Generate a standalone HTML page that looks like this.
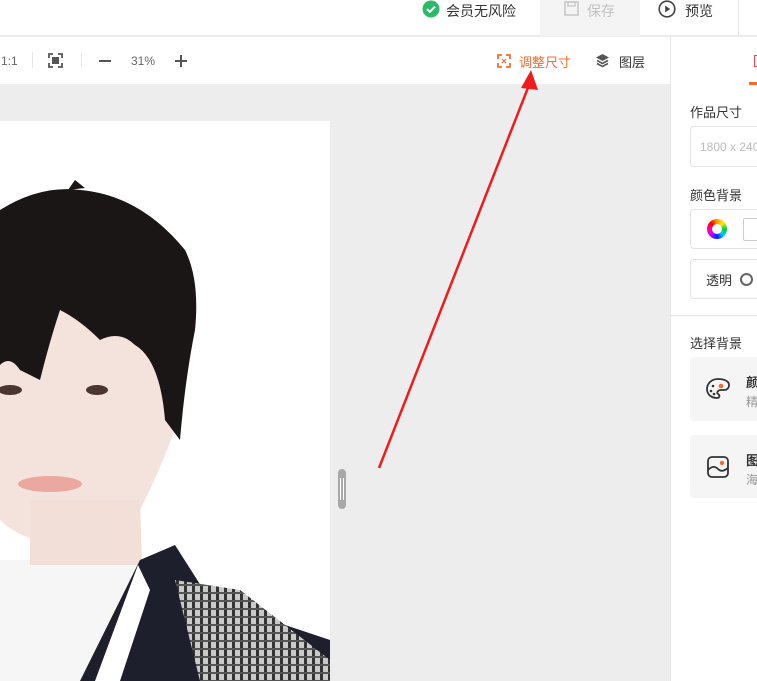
<!DOCTYPE html>
<html><head><meta charset="utf-8"><style>
*{margin:0;padding:0;box-sizing:border-box}
body{width:757px;height:681px;overflow:hidden;background:#ededed;font-family:"Liberation Sans","Noto Sans CJK SC",sans-serif;position:relative;color:#333}
.abs{position:absolute}
.t{font-size:13px;white-space:nowrap}
</style></head><body>
<div class="abs" style="left:0;top:0;width:757px;height:36px;background:#fff;border-bottom:1px solid #e8e8e8"></div>
<div class="abs" style="left:540px;top:0;width:100px;height:36px;background:#f4f4f4"></div>
<div class="abs" style="left:738px;top:0;width:1px;height:36px;background:#e8e8e8"></div>
<svg class="abs" style="left:422px;top:0" width="18" height="18" viewBox="0 0 18 18"><circle cx="9" cy="9" r="8.5" fill="#2dbb6b"/><path d="M5 9.2l2.8 2.6L13 6.6" stroke="#fff" stroke-width="2" fill="none"/></svg>
<div class="abs t" style="left:446px;top:1px;font-size:14px">会员无风险</div>
<svg class="abs" style="left:564px;top:1px" width="15" height="15" viewBox="0 0 15 15"><rect x="1" y="1" width="13" height="13" fill="none" stroke="#c8c8c8" stroke-width="1.6"/><rect x="4" y="1" width="7" height="4" fill="none" stroke="#c8c8c8" stroke-width="1.4"/></svg>
<div class="abs t" style="left:587px;top:1px;font-size:14px;color:#c0c0c0">保存</div>
<svg class="abs" style="left:658px;top:0" width="18" height="18" viewBox="0 0 18 18"><circle cx="9" cy="9" r="7.8" fill="none" stroke="#444" stroke-width="1.6"/><path d="M7.2 5.6v6.8l5-3.4z" fill="#444"/></svg>
<div class="abs t" style="left:685px;top:1px;font-size:14px">预览</div>
<div class="abs" style="left:0;top:37px;width:670px;height:47px;background:#fff"></div>
<div class="abs" style="left:670px;top:37px;width:87px;height:644px;background:#fff;border-left:1px solid #e6e6e6"></div>
<div class="abs t" style="left:1px;top:54px;font-size:12px;color:#666">1:1</div>
<div class="abs" style="left:32px;top:52px;width:1px;height:16px;background:#e5e5e5"></div>
<svg class="abs" style="left:48px;top:53px" width="15" height="15" viewBox="0 0 15 15"><path d="M1 5V1h4M10 1h4v4M14 10v4h-4M5 14H1v-4" stroke="#555" stroke-width="1.8" fill="none"/><rect x="4" y="4" width="7" height="7" fill="#555"/></svg>
<div class="abs" style="left:81px;top:52px;width:1px;height:16px;background:#e5e5e5"></div>
<div class="abs" style="left:99px;top:60px;width:12px;height:2px;background:#555"></div>
<div class="abs t" style="left:131px;top:54px;font-size:12px;color:#666">31%</div>
<div class="abs" style="left:175px;top:60px;width:12px;height:2px;background:#555"></div>
<div class="abs" style="left:180px;top:55px;width:2px;height:12px;background:#555"></div>
<svg class="abs" style="left:497px;top:54px" width="14" height="14" viewBox="0 0 14 14"><path d="M1 5V1h4M9 1h4v4M13 9v4H9M5 13H1V9" stroke="#f36d2f" stroke-width="1.8" fill="none"/><path d="M5 5l4 4M9 5L5 9" stroke="#f36d2f" stroke-width="1.2"/></svg>
<div class="abs t" style="left:519px;top:52px;color:#f36d2f">调整尺寸</div>
<svg class="abs" style="left:595px;top:53px" width="15" height="15" viewBox="0 0 15 15"><path d="M7.5 1L14 4.5 7.5 8 1 4.5z" fill="#555"/><path d="M2 7.5l5.5 3 5.5-3M2 10.5l5.5 3 5.5-3" stroke="#555" stroke-width="1.6" fill="none"/></svg>
<div class="abs t" style="left:619px;top:52px">图层</div>
<div class="abs" style="left:754px;top:55px;width:3px;height:12px;border:1px solid #e44;border-right:none"></div>
<div class="abs" style="left:749px;top:82px;width:8px;height:3px;background:#f36d2f"></div>
<div class="abs" style="left:0;top:121px;width:330px;height:560px;background:#fff;overflow:hidden">
<svg width="330" height="560" viewBox="0 121 330 560">
<defs><pattern id="pl" width="8" height="8" patternUnits="userSpaceOnUse"><rect width="8" height="8" fill="#c9c9c9"/><rect width="3" height="8" fill="#333"/><rect width="8" height="2" fill="#555"/></pattern></defs>
<path d="M0 560 L140 560 L150 681 L0 681z" fill="#f6f6f6"/>
<path d="M0 290 Q90 270 170 300 L178 420 Q165 460 140 510 Q110 545 60 545 Q20 540 0 520z" fill="#f4e3dd"/>
<path d="M30 500 L140 500 L142 565 L30 565z" fill="#f2e0d8"/>
<path d="M0 210 Q40 185 80 190 Q140 195 185 250 Q200 280 195 330 Q185 380 180 440 L165 420 Q160 360 135 345 Q120 330 100 340 Q80 320 60 310 Q50 340 40 380 L20 370 Q10 355 0 365z" fill="#1a1615"/>
<path d="M68 190 L75 180 L85 188z" fill="#1a1615"/>
<ellipse cx="50" cy="484" rx="32" ry="8" fill="#eaa8a0"/>
<ellipse cx="97" cy="390" rx="11" ry="5" fill="#4a3530"/>
<ellipse cx="10" cy="390" rx="12" ry="5" fill="#4a3530"/>
<path d="M80 681 L140 560 L175 545 L210 600 L330 640 L330 681z" fill="#1e1f2c"/>
<path d="M175 580 L240 590 L330 660 L330 681 L200 681z" fill="url(#pl)"/>
<path d="M95 681 L138 565 L150 590 L120 681z" fill="#fff"/>
</svg></div>
<div class="abs" style="left:338px;top:469px;width:8px;height:40px;background:#a8a8a8;border-radius:4px"></div>
<div class="abs" style="left:340px;top:478px;width:1px;height:22px;background:#fff"></div>
<div class="abs" style="left:343px;top:478px;width:1px;height:22px;background:#fff"></div>
<svg class="abs" style="left:0;top:0" width="757" height="681"><path d="M379 468 L531 80" stroke="#ee1c1c" stroke-width="2.5"/><path d="M531 70 L521 88 L538 90z" fill="#ee1c1c"/></svg>
<div class="abs t" style="left:690px;top:102px">作品尺寸</div>
<div class="abs" style="left:690px;top:126px;width:80px;height:41px;border:1px solid #e3e3e3;border-radius:4px"></div>
<div class="abs t" style="left:700px;top:140px;font-size:12px;color:#bbb">1800 x 2400</div>
<div class="abs t" style="left:690px;top:185px">颜色背景</div>
<div class="abs" style="left:690px;top:209px;width:80px;height:40px;border:1px solid #e3e3e3;border-radius:4px"></div>
<div class="abs" style="left:707px;top:219px;width:20px;height:20px;border-radius:50%;background:conic-gradient(#f90,#fe0,#0c4,#0cf,#02f,#c0f,#f0a,#f00,#f90)"></div>
<div class="abs" style="left:712px;top:224px;width:10px;height:10px;border-radius:50%;background:#fff"></div>
<div class="abs" style="left:743px;top:218px;width:20px;height:23px;border:1px solid #ccc;border-radius:2px"></div>
<div class="abs" style="left:690px;top:259px;width:80px;height:40px;border:1px solid #e3e3e3;border-radius:4px"></div>
<div class="abs t" style="left:706px;top:270px">透明</div>
<div class="abs" style="left:740px;top:273px;width:13px;height:13px;border:2px solid #666;border-radius:50%"></div>
<div class="abs" style="left:671px;top:315px;width:86px;height:1px;background:#e6e6e6"></div>
<div class="abs t" style="left:690px;top:333px">选择背景</div>
<div class="abs" style="left:690px;top:357px;width:80px;height:64px;background:#f5f5f5;border-radius:4px"></div>
<svg class="abs" style="left:705px;top:377px" width="26" height="24" viewBox="0 0 26 24"><path d="M13 2C6 2 2 7 2 12c0 6 5 9 10 9 3 0 3-3 1-4-2-1 0-4 3-4h3c3 0 5-2 5-5 0-4-5-6-11-6z" fill="none" stroke="#333" stroke-width="1.8"/><circle cx="8" cy="9" r="1.3" fill="#333"/><circle cx="6" cy="14" r="1.3" fill="#333"/><circle cx="9" cy="17" r="1.3" fill="#333"/><circle cx="16" cy="9" r="2.3" fill="#f36d2f"/></svg>
<div class="abs t" style="left:746px;top:372px;font-weight:bold">颜</div>
<div class="abs t" style="left:746px;top:393px;font-size:12px;color:#999">精</div>
<div class="abs" style="left:690px;top:435px;width:80px;height:63px;background:#f5f5f5;border-radius:4px"></div>
<svg class="abs" style="left:706px;top:455px" width="24" height="24" viewBox="0 0 24 24"><rect x="2" y="2" width="20" height="20" rx="4" fill="none" stroke="#333" stroke-width="1.8"/><path d="M2 15c4-4 7-4 10-1s6 2 10-1" fill="none" stroke="#333" stroke-width="1.8"/><circle cx="16" cy="8" r="2.2" fill="#f36d2f"/></svg>
<div class="abs t" style="left:746px;top:450px;font-weight:bold">图</div>
<div class="abs t" style="left:746px;top:471px;font-size:12px;color:#999">海</div>
</body></html>
